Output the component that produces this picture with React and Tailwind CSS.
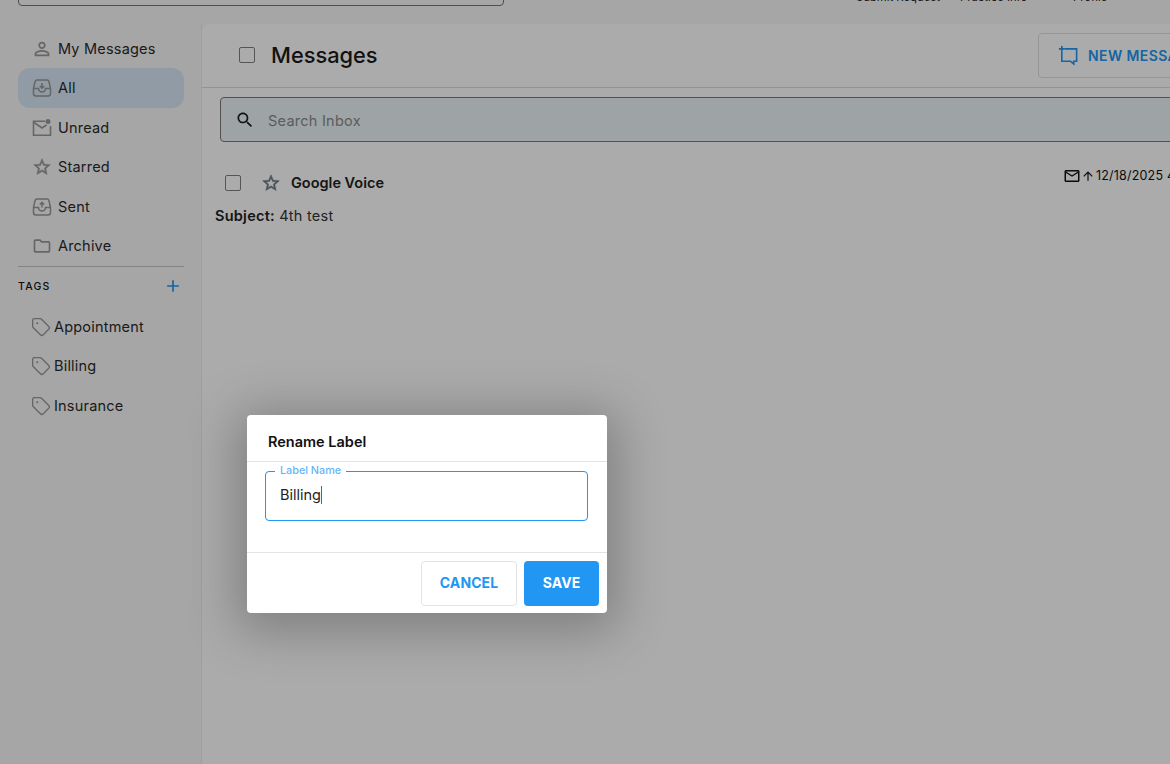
import React from "react";
import { Tag } from "lucide-react";

const P = {
  person: "M12 5.9c1.16 0 2.1.94 2.1 2.1s-.94 2.1-2.1 2.1S9.9 9.16 9.9 8s.94-2.1 2.1-2.1m0 9c2.97 0 6.1 1.46 6.1 2.1v1.1H5.9V17c0-.64 3.13-2.1 6.1-2.1M12 4C9.79 4 8 5.79 8 8s1.79 4 4 4 4-1.79 4-4-1.79-4-4-4zm0 9c-2.67 0-8 1.34-8 4v3h16v-3c0-2.66-5.33-4-8-4z",
  star: "M22 9.24l-7.19-.62L12 2 9.19 8.63 2 9.24l5.46 4.73L5.82 21 12 17.27 18.18 21l-1.63-7.03L22 9.24zM12 15.4l-3.76 2.27 1-4.28-3.32-2.88 4.38-.38L12 6.1l1.71 4.04 4.38.38-3.32 2.88 1 4.28L12 15.4z",
  search: "M15.5 14h-.79l-.28-.27C15.41 12.59 16 11.11 16 9.5 16 5.91 13.09 3 9.5 3S3 5.91 3 9.5 5.91 16 9.5 16c1.61 0 3.09-.59 4.23-1.57l.27.28v.79l5 4.99L20.49 19l-4.99-5zm-6 0C7.01 14 5 11.99 5 9.5S7.01 5 9.5 5 14 7.01 14 9.5 11.99 14 9.5 14z",
  mail: "M20 4H4c-1.1 0-1.99.9-1.99 2L2 18c0 1.1.9 2 2 2h16c1.1 0 2-.9 2-2V6c0-1.1-.9-2-2-2zm0 14H4V8l8 5 8-5v10zm-8-7L4 6h16l-8 5z",
  up: "M4 12l1.41 1.41L11 7.83V20h2V7.83l5.58 5.59L20 12l-8-8-8 8z",
  add: "M19 13h-6v6h-2v-6H5v-2h6V5h2v6h6v2z",
  folder: "M9.17 6l2 2H20v10H4V6h5.17M10 4H4c-1.1 0-1.99.9-1.99 2L2 18c0 1.1.9 2 2 2h16c1.1 0 2-.9 2-2V8c0-1.1-.9-2-2-2h-8l-2-2z",
};

const Mui = ({ d, className }) => (
  <svg viewBox="0 0 24 24" fill="currentColor" className={className}><path d={d} /></svg>
);

const StarIcon = ({ className }) => (
  <svg viewBox="0 0 24 24" fill="currentColor" stroke="currentColor" strokeWidth="0.6" className={className}><path d={P.star} /></svg>
);

const Tray = ({ up }) => (
  <svg viewBox="0 0 20 20" fill="none" stroke="currentColor" strokeWidth="1.5" className="w-5 h-5 shrink-0 text-[#989898]">
    <path d="M1.5 10.5 L3 3.8 A2.2 2.2 0 0 1 5.2 2 H14.8 A2.2 2.2 0 0 1 17 3.8 L18.5 10.5 V15.5 A2.5 2.5 0 0 1 16 18 H4 A2.5 2.5 0 0 1 1.5 15.5 Z" />
    <path d="M1.5 10.5 H6.5 A3.5 3.5 0 0 0 13.5 10.5 H18.5" />
    {up ? <path d="M10 10.5 V5.5 M7.8 7.5 L10 5.3 L12.2 7.5" /> : <path d="M10 5 V10 M7.8 8 L10 10.2 L12.2 8" />}
  </svg>
);

const Unread = () => (
  <svg viewBox="0 0 20 20" fill="none" className="w-5 h-5 shrink-0 text-[#989898]">
    <path d="M13 3.2 H1.5 V17.2 H18.5 V8" stroke="currentColor" strokeWidth="1.6" />
    <path d="M2 4.5 L10 10 L14.5 7" stroke="currentColor" strokeWidth="1.6" />
    <circle cx="16" cy="3.6" r="2.5" fill="currentColor" />
  </svg>
);

const NewMsg = () => (
  <svg viewBox="0 0 22 22" fill="none" stroke="currentColor" strokeWidth="1.7" className="w-[21px] h-[21px] shrink-0">
    <path d="M4 1 V7 M1 4 H7" />
    <path d="M7 4 H19.5 V17 H16.5 V20 L13 17 H4 V7" />
  </svg>
);

const Box = () => <div className="w-4 h-4 border border-[#7f7f7f] rounded-[2px] shrink-0" />;

const Item = ({ icon, label, active }) => (
  <div className={`h-10 w-[166px] rounded-xl flex items-center pl-[14px] gap-[6px] text-[14.5px] tracking-[0.2px] text-[#2b2b2b] ${active ? "bg-[#d8e8f6]" : ""}`}>
    {icon}
    <span>{label}</span>
  </div>
);

const TagItem = ({ label }) => (
  <div className="h-[39.5px] flex items-center pl-[13px] gap-[3px] text-[14.5px] tracking-[0.2px] text-[#2b2b2b]">
    <Tag className="w-5 h-5 text-[#989898] shrink-0" strokeWidth={1.6} />
    <span>{label}</span>
  </div>
);

const Icon20 = "w-5 h-5 shrink-0 text-[#989898]";

export default function App() {
  return (
    <div className="relative h-[764px] w-[1170px] overflow-hidden bg-[#f8f8f8] font-['Inter','Liberation_Sans',sans-serif]">
      {/* cropped top bar */}
      <header className="h-6 overflow-hidden">
        <div className="flex h-[30px] -mt-[25px] items-start">
          <div className="ml-[18px] w-[486px] h-[31px] border border-[#777] rounded" />
          <div className="ml-[352px] mt-[15px] flex text-[11.3px] leading-[15px] text-[#222]">
            <span className="w-[104px]">Submit Request</span>
            <span className="w-[113px]">Practice Info</span>
            <span>Profile</span>
          </div>
        </div>
      </header>

      <div className="flex h-[740px]">
        <aside className="w-[202px] shrink-0 pl-[18px] border-r border-[#ededed]">
          <div className="mt-[5px] flex flex-col">
            <div className="-mt-[0.5px]">
              <Item icon={<Mui d={P.person} className="w-5 h-5 shrink-0 text-[#989898] scale-110" />} label="My Messages" />
            </div>
            <div className="-mt-[1px]"><Item active icon={<Tray />} label="All" /></div>
            <div><Item icon={<Unread />} label="Unread" /></div>
            <div className="-mt-[1px]"><Item icon={<StarIcon className={Icon20} />} label="Starred" /></div>
            <div><Item icon={<Tray up />} label="Sent" /></div>
            <div className="-mt-[1px]"><Item icon={<Mui d={P.folder} className={Icon20} />} label="Archive" /></div>
          </div>
          <div className="w-[166px] mt-[0.5px] border-t border-[#c4c4c4]" />
          <div className="w-[166px] h-[39px] flex items-center justify-between text-[10.5px] font-medium tracking-[1.2px] text-[#111]">
            <span>TAGS</span>
            <Mui d={P.add} className="w-5 h-5 text-[#2196f3] mr-[1px] mb-[2px]" />
          </div>
          <div className="mt-[1px]">
            <TagItem label="Appointment" />
            <TagItem label="Billing" />
            <TagItem label="Insurance" />
          </div>
        </aside>

        <main className="flex-1 min-w-0 bg-white rounded-tl-lg overflow-hidden">
          <div className="h-[64px] border-b border-[#dcdcdc] flex items-center pl-[37px] pb-[1px]">
            <Box />
            <h1 className="ml-4 text-[21.8px] font-medium text-[#1a1a1a]">Messages</h1>
            <div className="ml-auto -mr-[200px] mt-[1px] w-[332px] shrink-0 h-[45px] border border-[#dedede] rounded flex items-center pl-[19px] gap-[9px] text-[#2196f3] text-[14px] font-semibold tracking-[0.4px] whitespace-nowrap">
              <NewMsg />
              <span>NEW MESSAGE</span>
            </div>
          </div>
          <div className="pl-[18px] pt-[9px]">
            <div className="w-[1100px] h-[45px] bg-[#ecf4f8] border border-[#7a7a7a] rounded flex items-center pl-[14px] text-[#1f1f1f]">
              <Mui d={P.search} className="w-5 h-5 shrink-0" />
              <span className="ml-[13px] mt-[2px] text-[14.5px] tracking-[0.25px] text-[#8a8a8a]">Search Inbox</span>
            </div>
          </div>
          <div className="pl-[23px] pt-[30px] flex items-center">
            <Box />
            <StarIcon className="ml-[20px] w-5 h-5 text-[#6b7a88] shrink-0" />
            <span className="ml-[10px] text-[14.5px] font-semibold whitespace-nowrap text-[#222]">Google Voice</span>
            <div className="ml-[679px] -mt-[14px] flex items-center text-[12.5px] tracking-[0.2px] text-[#111] whitespace-nowrap">
              <Mui d={P.mail} className="w-[18px] h-[18px] shrink-0" />
              <Mui d={P.up} className="w-[14px] h-[14px] shrink-0" />
              <span className="ml-[1px]">12/18/2025 4:32 PM</span>
            </div>
          </div>
          <div className="pl-[13px] mt-[11px] text-[14.5px] tracking-[0.25px] text-[#333]">
            <b className="font-semibold text-[#222]">Subject:</b> 4th test
          </div>
        </main>
      </div>

      {/* backdrop */}
      <div className="absolute inset-0 bg-black/33" />

      {/* dialog */}
      <div className="absolute left-[247px] top-[415px] w-[360px] h-[198px] bg-white rounded shadow-[0_8px_50px_10px_rgba(0,0,0,0.26)] flex flex-col">
        <div className="h-[47px] shrink-0 border-b border-[#e3e3e3] flex items-center pl-[21px] pt-[7px] text-[14.5px] font-semibold text-[#111]">
          Rename Label
        </div>
        <div className="flex-1 px-[18px] pt-[9px]">
          <div className="relative h-[50px] w-[323px] border border-[#2196f3] rounded flex items-center pl-[14px] pb-[2px] text-[14.5px] text-[#222]">
            <span className="absolute left-[9px] -top-[8px] bg-white px-[5px] text-[10.8px] leading-[14px] font-medium text-[#64b5f6]">Label Name</span>
            <span className="border-r border-[#1976d2] leading-[18px]">Billing</span>
          </div>
        </div>
        <div className="h-[61px] shrink-0 border-t border-[#e3e3e3] flex justify-end items-start pt-2 pr-2 gap-[7px]">
          <div className="w-[96px] h-[45px] pb-[2px] border border-[#e3e3e3] rounded flex items-center justify-center text-[14px] font-bold tracking-[0.1px] text-[#2196f3]">CANCEL</div>
          <div className="w-[75px] h-[45px] pb-[2px] bg-[#2196f3] rounded flex items-center justify-center text-[14px] font-bold tracking-[0.1px] text-white">SAVE</div>
        </div>
      </div>
    </div>
  );
}
